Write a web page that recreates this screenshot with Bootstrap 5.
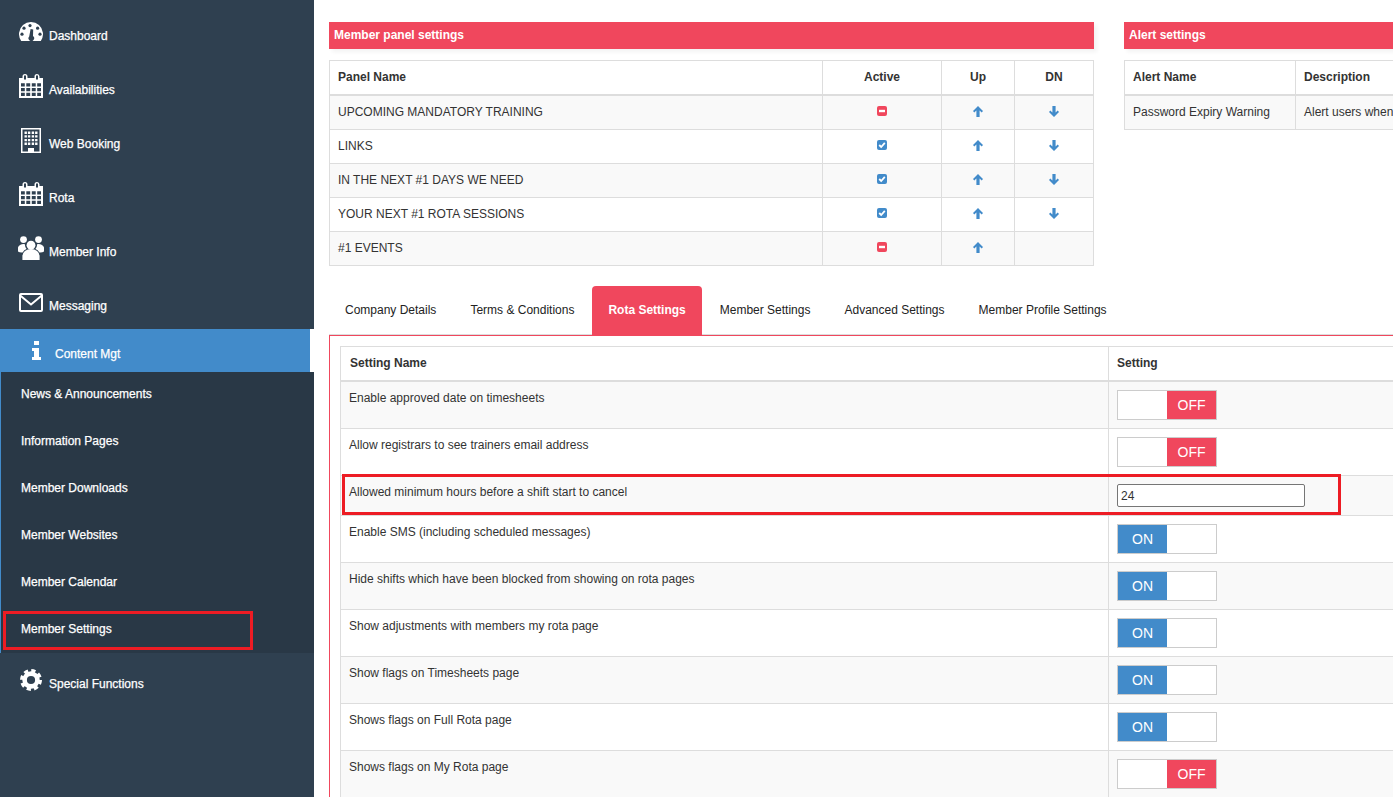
<!DOCTYPE html>
<html lang="en">
<head>
<meta charset="utf-8">
<title>Member Settings</title>
<link rel="stylesheet" href="https://cdn.jsdelivr.net/npm/bootstrap@5.3.0/dist/css/bootstrap.min.css">
<style>
html,body{height:797px;overflow:hidden;background:#fff}
body{font-family:"Liberation Sans",Arial,sans-serif;font-size:12px;line-height:17px;color:#333}
.shell{height:797px}
.sidebar{width:314px;flex:0 0 314px;background:#2f4050;padding-top:5px;height:797px}
.side-link{height:54px;padding:0 0 0 19px;color:#fff;display:flex;align-items:center;gap:6px;font-weight:400;-webkit-text-stroke:.25px #fff}
.side-link span{margin-top:8px}
.side-link:hover{color:#fff}
.side-icon{width:24px;flex:0 0 24px;display:block}
.side-people{padding-left:18px;gap:5px}
.side-people .side-icon{width:26px;flex-basis:26px}
.side-gear{padding-left:20px;gap:7px}
.side-gear .side-icon{width:22px;flex-basis:22px}
.side-current{height:43px;width:310px;background:#428bca;color:#fff;padding-left:32px;display:flex;align-items:center;gap:14px;-webkit-text-stroke:.25px #fff}
.side-current span{margin-top:8px}
.side-edge{background:#fff;height:43px}
.sub-list{background:#293846;border-left:1px solid #428bca;height:281px;margin:0;padding:0;list-style:none}
.sub-link{height:47px;padding-left:20px;padding-bottom:3px;display:flex;align-items:center;color:#fff;position:relative;-webkit-text-stroke:.25px #fff}
.sub-link:hover{color:#fff}
.mark-side{position:absolute;left:2px;top:4px;width:250px;height:39px;border:3px solid #ed1c24}
.main-area{flex:1 1 auto;min-width:0;padding:22px 0 0 15px;overflow:hidden;position:relative}
.top-panels{gap:30px;width:1300px}
.panel-a{width:765px;flex:0 0 765px}
.panel-b{width:500px;flex:0 0 500px}
.bar{height:27px;background:#f0475d;color:#fff;font-weight:700;padding:5px 5px 4px;margin-bottom:11px;box-shadow:3px 3px 4px #f3f3f3}
.grid-table{--bs-table-striped-bg:#f9f9f9;--bs-table-striped-color:#333;--bs-table-color:#333;--bs-border-color:#ddd;border-color:#ddd;table-layout:fixed;margin:0;font-size:12px;line-height:17px;color:#333}
.grid-table>thead>tr>th{border-bottom:2px solid #ddd;padding:7px 8px 8px;font-weight:700;color:#333;height:34px}
.grid-table>tbody>tr>td{padding:8px;vertical-align:top;height:34px}
.grid-table>tbody>tr>td.mid{text-align:center;vertical-align:middle;padding:0}
.grid-table th.mid{text-align:center}
.glyph{display:block;margin:0 auto 2px}
.folders{gap:2px;margin-top:20px;border-bottom:1px solid #ddd;flex-wrap:nowrap;height:49px}
.folders .nav-link{height:49px;padding:16px;color:#222;font-size:12px;line-height:17px;border:0;border-radius:4px 4px 0 0;white-space:nowrap;background:none}
.folders .nav-link.active{background:#f0475d;color:#fff;font-weight:700}
.tab-box{border-top:1px solid #f0475d;border-left:1px solid #f0475d;padding:10px;width:1300px}
.set-table{width:1200px}
.set-table>tbody>tr>td{height:47px}
.set-table>tbody>tr.short-row>td{height:40px}
.set-table>thead>tr>th{height:35px;padding:8px}
.set-table>thead>tr>th:first-child{padding-left:9px}
.flip{width:100px;height:30px;border:1px solid #ccc;display:flex;background:#fff;font-size:14px;line-height:28px;color:#fff;text-align:center}
.flip b{font-weight:400;width:49px;display:block}
.flip i{display:block;width:49px}
.flip-on{background:#428bca}
.flip-off{background:#f0475d}
.num-field{display:block;width:188px;height:23px;border:1px solid #767676;border-radius:2px;font:12px "Liberation Sans",Arial,sans-serif;color:#333;padding:1px 3px;background:#fff}
.mark-row{position:absolute;left:28px;top:474px;width:999px;height:41px;border:3px solid #ed1c24;pointer-events:none}
</style>
</head>
<body>
<svg width="0" height="0" class="position-absolute" aria-hidden="true">
  <symbol id="g-up" viewBox="0 0 10 11"><path fill="#428bca" d="M5 0 10 5 8.7 6.5 6.6 4.6V11H3.4V4.6L1.3 6.5 0 5Z"/></symbol>
  <symbol id="g-dn" viewBox="0 0 10 11"><path fill="#428bca" d="M5 11 10 6 8.7 4.5 6.6 6.4V0H3.4V6.4L1.3 4.5 0 6Z"/></symbol>
  <symbol id="g-no" viewBox="0 0 10 10"><rect width="10" height="10" rx="2" fill="#f0475d"/><rect x="2" y="3.8" width="6" height="2.4" fill="#fff"/></symbol>
  <symbol id="g-ok" viewBox="0 0 10 10"><rect width="10" height="10" rx="2" fill="#428bca"/><path d="M2.2 5 4.2 7 7.8 2.9" fill="none" stroke="#fff" stroke-width="1.8"/></symbol>
  <symbol id="g-cal" viewBox="0 0 24 24"><path fill="#fff" d="M0 4H3.5V2.5A2.5 2.5 0 0 1 8.5 2.5V4H15.5V2.5A2.5 2.5 0 0 1 20.5 2.5V4H24V24H0Z"/><path fill="#2f4050" d="M5 1.5h2V5.5H5zM17 1.5h2V5.5h-2zM2 9.2h3.8v3.2H2zM7.3 9.2h3.9v3.2H7.3zM12.8 9.2h3.9v3.2h-3.9zM18.2 9.2H22v3.2h-3.8zM2 14h3.8v3.2H2zM7.3 14h3.9v3.2H7.3zM12.8 14h3.9v3.2h-3.9zM18.2 14H22v3.2h-3.8zM2 18.8h3.8V22H2zM7.3 18.8h3.9V22H7.3zM12.8 18.8h3.9V22h-3.9zM18.2 18.8H22V22h-3.8z"/></symbol>
</svg>
<div class="shell d-flex">
  <nav class="sidebar">
    <a class="side-link text-decoration-none" href="#">
      <svg class="side-icon" width="24" height="20" viewBox="0 0 24 20"><path fill="#fff" d="M2.2 19A12 12 0 1 1 21.8 19Z"/><g fill="#2f4050"><circle cx="11" cy="3.6" r="1.6"/><circle cx="5" cy="6.2" r="1.6"/><circle cx="18.6" cy="6.2" r="1.6"/><circle cx="3" cy="12.2" r="1.6"/><circle cx="21" cy="12.2" r="1.6"/><path d="M11.6 7 L14.2 7.4 L14 14 A2.8 2.8 0 1 1 10.2 14.4Z"/></g></svg>
      <span>Dashboard</span></a>
    <a class="side-link text-decoration-none" href="#">
      <svg class="side-icon" width="24" height="24"><use href="#g-cal"/></svg>
      <span>Availabilities</span></a>
    <a class="side-link text-decoration-none" href="#">
      <svg class="side-icon" width="24" height="25" viewBox="0 0 24 25"><path fill="#fff" d="M2 0H22V25H2Z"/><path fill="#2f4050" d="M3.5 1.5H20.5V23.5H15V20H9V23.5H3.5Z"/><path fill="#fff" d="M5.5 3.5h2.4v2.4H5.5zM8.9 3.5h2.4v2.4H8.9zM12.7 3.5h2.4v2.4h-2.4zM16.1 3.5h2.4v2.4h-2.4zM5.5 7.2h2.4v2.4H5.5zM8.9 7.2h2.4v2.4H8.9zM12.7 7.2h2.4v2.4h-2.4zM16.1 7.2h2.4v2.4h-2.4zM5.5 10.9h2.4v2.4H5.5zM8.9 10.9h2.4v2.4H8.9zM12.7 10.9h2.4v2.4h-2.4zM16.1 10.9h2.4v2.4h-2.4zM5.5 14.6h2.4V17H5.5zM8.9 14.6h2.4V17H8.9zM12.7 14.6h2.4V17h-2.4zM16.1 14.6h2.4V17h-2.4z"/></svg>
      <span>Web Booking</span></a>
    <a class="side-link text-decoration-none" href="#">
      <svg class="side-icon" width="24" height="24"><use href="#g-cal"/></svg>
      <span>Rota</span></a>
    <a class="side-link side-people text-decoration-none" href="#">
      <svg class="side-icon" width="26" height="24" viewBox="0 0 26 24"><g fill="#fff"><circle cx="5.5" cy="3.6" r="3.4"/><circle cx="20.5" cy="3.6" r="3.4"/><circle cx="13" cy="9.2" r="4.4"/><path d="M0 11.5A5.5 4 0 0 1 7 8.2 6 6 0 0 0 8.6 13 8 8 0 0 0 4.6 16.4 5 3 0 0 1 0 11.5Z"/><path d="M26 11.5A5.5 4 0 0 0 19 8.2 6 6 0 0 1 17.4 13 8 8 0 0 1 21.4 16.4 5 3 0 0 0 26 11.5Z"/><path d="M4.4 24V20A8.6 7 0 0 1 21.6 20V24Z"/></g></svg>
      <span>Member Info</span></a>
    <a class="side-link text-decoration-none" href="#">
      <svg class="side-icon" width="24" height="19" viewBox="0 0 24 19"><rect x="1" y="1" width="22" height="17" rx="1" fill="none" stroke="#fff" stroke-width="2"/><path d="M1.2 2.5 12 11.5 22.8 2.5" fill="none" stroke="#fff" stroke-width="2"/></svg>
      <span>Messaging</span></a>
    <div class="d-flex">
      <a class="side-current text-decoration-none" href="#">
        <svg width="9" height="19" viewBox="0 0 9 19" class="d-block"><path fill="#fff" d="M2 0H7V4H2ZM0 7H7V16H9V19H0V16H2V10H0Z"/></svg>
        <span>Content Mgt</span></a>
      <div class="side-edge flex-grow-1"></div>
    </div>
    <ul class="sub-list">
      <li><a class="sub-link text-decoration-none" href="#">News &amp; Announcements</a></li>
      <li><a class="sub-link text-decoration-none" href="#">Information Pages</a></li>
      <li><a class="sub-link text-decoration-none" href="#">Member Downloads</a></li>
      <li><a class="sub-link text-decoration-none" href="#">Member Websites</a></li>
      <li><a class="sub-link text-decoration-none" href="#">Member Calendar</a></li>
      <li><a class="sub-link text-decoration-none" href="#">Member Settings<em class="mark-side"></em></a></li>
    </ul>
    <a class="side-link side-gear text-decoration-none" href="#">
      <svg class="side-icon" width="22" height="22" viewBox="0 0 22 22"><circle cx="11" cy="11" r="6.4" fill="none" stroke="#fff" stroke-width="4.6"/><circle cx="11" cy="11" r="9.4" fill="none" stroke="#fff" stroke-width="3.2" stroke-dasharray="4.2 3.18"/></svg>
      <span>Special Functions</span></a>
  </nav>

  <main class="main-area">
    <div class="top-panels d-flex">
      <section class="panel-a">
        <div class="bar">Member panel settings</div>
        <table class="table table-bordered table-striped grid-table">
          <colgroup><col style="width:493px"><col style="width:119px"><col style="width:73px"><col style="width:79px"></colgroup>
          <thead><tr><th>Panel Name</th><th class="mid">Active</th><th class="mid">Up</th><th class="mid">DN</th></tr></thead>
          <tbody>
            <tr><td>UPCOMING MANDATORY TRAINING</td><td class="mid"><svg class="glyph" width="10" height="10"><use href="#g-no"/></svg></td><td class="mid"><svg class="glyph" width="10" height="11"><use href="#g-up"/></svg></td><td class="mid"><svg class="glyph" width="10" height="11"><use href="#g-dn"/></svg></td></tr>
            <tr><td>LINKS</td><td class="mid"><svg class="glyph" width="10" height="10"><use href="#g-ok"/></svg></td><td class="mid"><svg class="glyph" width="10" height="11"><use href="#g-up"/></svg></td><td class="mid"><svg class="glyph" width="10" height="11"><use href="#g-dn"/></svg></td></tr>
            <tr><td>IN THE NEXT #1 DAYS WE NEED</td><td class="mid"><svg class="glyph" width="10" height="10"><use href="#g-ok"/></svg></td><td class="mid"><svg class="glyph" width="10" height="11"><use href="#g-up"/></svg></td><td class="mid"><svg class="glyph" width="10" height="11"><use href="#g-dn"/></svg></td></tr>
            <tr><td>YOUR NEXT #1 ROTA SESSIONS</td><td class="mid"><svg class="glyph" width="10" height="10"><use href="#g-ok"/></svg></td><td class="mid"><svg class="glyph" width="10" height="11"><use href="#g-up"/></svg></td><td class="mid"><svg class="glyph" width="10" height="11"><use href="#g-dn"/></svg></td></tr>
            <tr><td>#1 EVENTS</td><td class="mid"><svg class="glyph" width="10" height="10"><use href="#g-no"/></svg></td><td class="mid"><svg class="glyph" width="10" height="11"><use href="#g-up"/></svg></td><td class="mid"></td></tr>
          </tbody>
        </table>
      </section>
      <section class="panel-b">
        <div class="bar">Alert settings</div>
        <table class="table table-bordered table-striped grid-table">
          <colgroup><col style="width:171px"><col></colgroup>
          <thead><tr><th>Alert Name</th><th>Description</th></tr></thead>
          <tbody><tr><td>Password Expiry Warning</td><td>Alert users when</td></tr></tbody>
        </table>
      </section>
    </div>

    <ul class="nav nav-tabs folders">
      <li class="nav-item"><a class="nav-link" href="#">Company Details</a></li>
      <li class="nav-item"><a class="nav-link" href="#">Terms &amp; Conditions</a></li>
      <li class="nav-item"><a class="nav-link active" href="#">Rota Settings</a></li>
      <li class="nav-item"><a class="nav-link" href="#">Member Settings</a></li>
      <li class="nav-item"><a class="nav-link" href="#">Advanced Settings</a></li>
      <li class="nav-item"><a class="nav-link" href="#">Member Profile Settings</a></li>
    </ul>
    <div class="tab-box">
      <table class="table table-bordered table-striped grid-table set-table">
        <colgroup><col style="width:768px"><col></colgroup>
        <thead><tr><th>Setting Name</th><th>Setting</th></tr></thead>
        <tbody>
          <tr><td>Enable approved date on timesheets</td><td><div class="flip"><i></i><b class="flip-off">OFF</b></div></td></tr>
          <tr><td>Allow registrars to see trainers email address</td><td><div class="flip"><i></i><b class="flip-off">OFF</b></div></td></tr>
          <tr class="short-row"><td>Allowed minimum hours before a shift start to cancel</td><td><input class="num-field" type="text" value="24" aria-label="Minimum hours"></td></tr>
          <tr><td>Enable SMS (including scheduled messages)</td><td><div class="flip"><b class="flip-on">ON</b><i></i></div></td></tr>
          <tr><td>Hide shifts which have been blocked from showing on rota pages</td><td><div class="flip"><b class="flip-on">ON</b><i></i></div></td></tr>
          <tr><td>Show adjustments with members my rota page</td><td><div class="flip"><b class="flip-on">ON</b><i></i></div></td></tr>
          <tr><td>Show flags on Timesheets page</td><td><div class="flip"><b class="flip-on">ON</b><i></i></div></td></tr>
          <tr><td>Shows flags on Full Rota page</td><td><div class="flip"><b class="flip-on">ON</b><i></i></div></td></tr>
          <tr><td>Shows flags on My Rota page</td><td><div class="flip"><i></i><b class="flip-off">OFF</b></div></td></tr>
        </tbody>
      </table>
    </div>
    <div class="mark-row"></div>
  </main>
</div>
<script src="https://cdn.jsdelivr.net/npm/bootstrap@5.3.0/dist/js/bootstrap.bundle.min.js"></script>
</body>
</html>
